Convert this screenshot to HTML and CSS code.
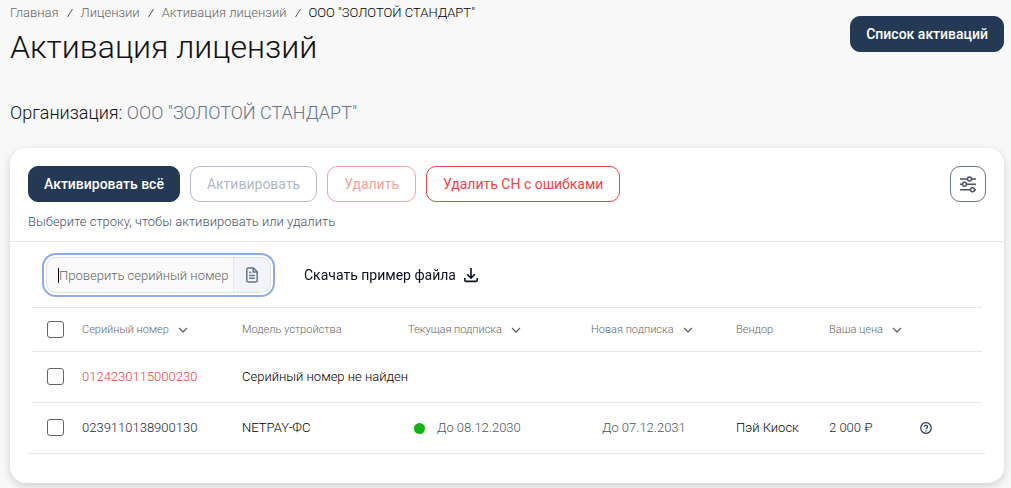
FILE: index.html
```html
<!DOCTYPE html>
<html lang="ru">
<head>
<meta charset="utf-8">
<meta name="viewport" content="width=device-width, initial-scale=1">
<title>Активация лицензий</title>
<link rel="stylesheet" href="styles.css">
</head>
<body>
<svg class="sprite" aria-hidden="true">
  <symbol id="chevron" viewBox="0 0 10 10"><path d="M1 3l4 4 4-4" fill="none" stroke="currentColor" stroke-width="1.3"/></symbol>
</svg>
<main class="page">
  <header class="page-header">
    <div>
      <nav class="breadcrumbs" aria-label="Навигация">
        <a href="#">Главная</a><svg class="slash" viewBox="0 0 8 10"><path d="M1.5 9l5-8"/></svg>
        <a href="#">Лицензии</a><svg class="slash" viewBox="0 0 8 10"><path d="M1.5 9l5-8"/></svg>
        <a href="#">Активация лицензий</a><svg class="slash" viewBox="0 0 8 10"><path d="M1.5 9l5-8"/></svg>
        <span class="current">ООО "ЗОЛОТОЙ СТАНДАРТ"</span>
      </nav>
      <h1 class="title">Активация лицензий</h1>
    </div>
    <button class="btn btn-primary" type="button">Список активаций</button>
  </header>

  <p class="organization">Организация: <span class="organization-name">ООО "ЗОЛОТОЙ СТАНДАРТ"</span></p>

  <section class="card">
    <div class="toolbar">
      <div class="actions">
        <button class="btn btn-primary" type="button">Активировать всё</button>
        <button class="btn btn-outline" type="button" disabled>Активировать</button>
        <button class="btn btn-danger" type="button" disabled>Удалить</button>
        <button class="btn btn-danger" type="button">Удалить СН с ошибками</button>
        <button class="btn-settings" type="button" aria-label="Настройки">
          <svg width="18" height="18" viewBox="0 0 18 18" fill="none" stroke="currentColor" stroke-width="1.5">
            <path d="M1 4h7.500M12.500 4H17M1 9.300h2.500M7.500 9.300H17M1 14.700h10.500M15.500 14.700H17"/>
            <circle cx="10.500" cy="4" r="2"/><circle cx="5.500" cy="9.300" r="2"/><circle cx="13.500" cy="14.700" r="2"/>
          </svg>
        </button>
      </div>
      <p class="hint">Выберите строку, чтобы активировать или удалить</p>
    </div>

    <div class="content">
      <div class="lookup">
        <div class="search">
          <input class="search-input" type="text" placeholder="Проверить серийный номер" aria-label="Проверить серийный номер" autofocus>
          <button class="search-file" type="button" aria-label="Загрузить файл">
            <svg width="12" height="16" viewBox="0 0 12 16" fill="none" stroke="currentColor" stroke-width="1.5">
              <path d="M2.200 1h5.300L11.200 4.700v8.900a1.400 1.400 0 0 1-1.400 1.400H2.200a1.400 1.400 0 0 1-1.400-1.400V2.400A1.400 1.400 0 0 1 2.200 1z"/>
              <path d="M7.200 1v4h4M3.200 5.500h2M3.200 8.400h5.600M3.200 11.300h5.600"/>
            </svg>
          </button>
        </div>
        <a class="download" href="#">Скачать пример файла
          <svg width="14" height="16" viewBox="0 0 14 16" fill="none" stroke="currentColor" stroke-width="1.6">
            <path d="M7 1v10M3.200 7.200L7 11l3.800-3.800M.800 11v2.200a1.200 1.200 0 0 0 1.200 1.200h10a1.200 1.200 0 0 0 1.200-1.200V11"/>
          </svg>
        </a>
      </div>

      <div class="table-wrap">
        <table class="table">
          <colgroup>
            <col class="col-check"><col class="col-serial"><col class="col-model"><col class="col-now"><col class="col-new"><col class="col-vendor"><col class="col-price"><col>
          </colgroup>
          <thead>
            <tr>
              <th><input class="check" type="checkbox" aria-label="Выбрать все"></th>
              <th>Серийный номер<svg class="sort"><use href="#chevron"/></svg></th>
              <th>Модель устройства</th>
              <th>Текущая подписка<svg class="sort"><use href="#chevron"/></svg></th>
              <th>Новая подписка<svg class="sort"><use href="#chevron"/></svg></th>
              <th>Вендор</th>
              <th>Ваша цена<svg class="sort"><use href="#chevron"/></svg></th>
              <th></th>
            </tr>
          </thead>
          <tbody>
            <tr>
              <td><input class="check" type="checkbox" aria-label="Выбрать 0124230115000230"></td>
              <td class="error">0124230115000230</td>
              <td class="strong">Серийный номер не найден</td>
              <td></td><td></td><td></td><td></td><td></td>
            </tr>
            <tr>
              <td><input class="check" type="checkbox" aria-label="Выбрать 0239110138900130"></td>
              <td>0239110138900130</td>
              <td class="strong">NETPAY-ФС</td>
              <td class="muted"><span class="status"></span>До 08.12.2030</td>
              <td class="muted date-new">До 07.12.2031</td>
              <td class="strong">Пэй Киоск</td>
              <td>2 000 ₽</td>
              <td>
                <button class="help" type="button" aria-label="Справка">
                  <svg width="12" height="12" viewBox="0 0 12 12" fill="none" stroke="currentColor" stroke-width="1.200">
                    <circle cx="6" cy="6" r="5.300"/>
                    <path d="M4.400 4.900a1.600 1.500 0 1 1 2.500 1.100c-.6.4-.9.6-.9 1.200M6 8.200v1.200"/>
                  </svg>
                </button>
              </td>
            </tr>
          </tbody>
        </table>
      </div>
    </div>
  </section>
</main>
</body>
</html>
```
FILE: styles.css
```css
* {
  box-sizing: border-box;
}

body {
  margin: 0;
  background: #f8f8f8;
  color: #1f2937;
  font-family: Roboto, "Noto Sans", sans-serif;
  font-size: 13px;
  font-weight: 300;
}

button,
input {
  font: inherit;
}

h1,
p {
  margin: 0;
}

.sprite {
  position: absolute;
  width: 0;
  height: 0;
}

.page {
  padding: 4px 7px 5px 10px;
}

.page-header {
  display: flex;
  justify-content: space-between;
  align-items: flex-start;
}

.page-header .btn {
  margin-top: 12px;
}

.breadcrumbs {
  display: flex;
  align-items: center;
  line-height: 18px;
}

.breadcrumbs a {
  color: #666666;
  text-decoration: none;
}

.breadcrumbs .current {
  color: #000000;
}

.slash {
  width: 8px;
  height: 10px;
  margin: 0 7px;
  fill: none;
  stroke: #555555;
}

.title {
  color: #111111;
  font-size: 32px;
  font-weight: 300;
  line-height: 50px;
}

.organization {
  margin-top: 29px;
  color: #111111;
  font-size: 18px;
  line-height: 24px;
}

.organization-name {
  color: #64748b;
}

.card {
  margin-top: 23px;
  padding-bottom: 29px;
  border-radius: 16px;
  background: #ffffff;
  box-shadow: 0 3px 8px rgba(0, 0, 0, 0.16);
}

.toolbar {
  padding: 18px 18px 9px;
  border-bottom: 1px solid #e2e8f0;
}

.actions {
  display: flex;
  gap: 10px;
}

.btn {
  height: 36px;
  padding: 0 16px;
  border: 1px solid;
  border-radius: 10px;
  background: #ffffff;
  font-size: 14px;
  font-weight: 400;
  white-space: nowrap;
}

.btn-primary {
  padding: 0 15px;
  border-color: #243a54;
  background: #243a54;
  color: #ffffff;
  font-weight: 500;
}

.btn-outline {
  border-color: #64748b;
  color: #64748b;
}

.btn-danger {
  border-color: #ef4444;
  color: #ef4444;
}

.btn:disabled {
  opacity: 0.5;
}

.btn-settings {
  display: grid;
  place-items: center;
  width: 36px;
  height: 36px;
  margin-left: auto;
  padding: 0;
  border: 1px solid #64748b;
  border-radius: 10px;
  background: #ffffff;
  color: #475569;
}

.hint {
  margin-top: 10px;
  color: #475569;
  line-height: 20px;
}

.content {
  padding: 15px 18px 0;
}

.lookup {
  display: flex;
  align-items: center;
  gap: 33px;
  padding: 0 18px 14px;
}

.search {
  display: flex;
  width: 225px;
  height: 36px;
  border: 1px solid #e0e0e0;
  border-radius: 10px;
  background: #fafafa;
  outline: 2px solid #8eabf2;
  outline-offset: 2px;
}

.search-input {
  flex: 1;
  min-width: 0;
  padding: 0 0 0 12px;
  border: 0;
  background: none;
  outline: 0;
}

.search-input::placeholder {
  color: #666666;
}

.search-input:placeholder-shown {
  background: linear-gradient(#000000, #000000) 11px center / 1px 15px no-repeat;
  caret-color: transparent;
}

.search-file {
  display: grid;
  place-items: center;
  width: 37px;
  padding: 0;
  border: 0;
  border-left: 1px solid #e2e8f0;
  border-radius: 0 9px 9px 0;
  background: #f1f4f9;
  color: #64748b;
}

.download {
  display: flex;
  align-items: center;
  gap: 8px;
  color: #0b1020;
  font-size: 14px;
  font-weight: 400;
  text-decoration: none;
}

.table-wrap {
  padding: 0 4px;
  border-bottom: 1px solid #e2e8f0;
}

.table {
  width: 100%;
  table-layout: fixed;
  border-collapse: separate;
  border-spacing: 0;
  border-top: 1px solid #e2e8f0;
}

.col-check {
  width: 50px;
}

.col-serial {
  width: 160px;
}

.col-model {
  width: 166px;
}

.col-now {
  width: 183px;
}

.col-new {
  width: 145px;
}

.col-vendor {
  width: 93px;
}

.col-price {
  width: 91px;
}

.table th,
.table td {
  padding: 0 0 1px;
  text-align: left;
  vertical-align: middle;
  white-space: nowrap;
}

.table th {
  height: 44px;
  border-bottom: 1px solid #e2e8f0;
  color: #666666;
  font-size: 11px;
  font-weight: 300;
}

.table td {
  height: 51px;
}

.table tbody tr:not(:last-child) td {
  border-bottom: 1px solid #e2e8f0;
}

.table tbody tr:last-child td {
  height: 50px;
}

.table .strong {
  color: #000000;
}

.table .muted {
  color: #4b5563;
}

.table .error {
  color: #ef4444;
}

.table .date-new {
  padding-left: 11px;
}

.check {
  display: block;
  appearance: none;
  width: 17px;
  height: 17px;
  margin: 0 0 0 15px;
  border: 1px solid #666666;
  border-radius: 3px;
  background: #ffffff;
}

.sort {
  width: 10px;
  height: 10px;
  margin-left: 9px;
  vertical-align: -2px;
}

.status {
  display: inline-block;
  width: 11px;
  height: 11px;
  margin: 0 12px 0 6px;
  border-radius: 50%;
  background: #12b312;
  vertical-align: -2px;
}

.help {
  display: block;
  padding: 0;
  border: 0;
  background: none;
  color: #243a54;
}

.help svg {
  display: block;
}
```
